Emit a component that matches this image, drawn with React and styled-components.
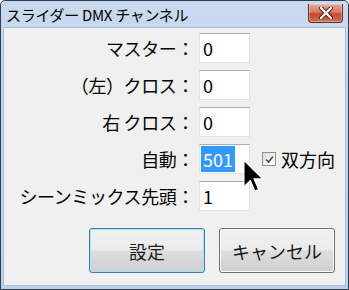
import styled, { createGlobalStyle } from "styled-components";

const GlobalStyle = createGlobalStyle`
  html, body {
    margin: 0;
    padding: 0;
    background: #ffffff;
  }
  * {
    box-sizing: border-box;
  }
`;

const FONT = `"Noto Sans CJK JP", "Noto Sans", sans-serif`;

const Window = styled.div`
  width: 349px;
  height: 290px;
  border: 1px solid #2e3e50;
  border-radius: 5px 5px 0 0;
  background: linear-gradient(to bottom, #c9daee 0%, #c2d5ec 30%, #bcd1ea 100%);
  display: flex;
  flex-direction: column;
  font-family: ${FONT};
  color: #000;
`;

const TitleBar = styled.div`
  height: 26px;
  display: flex;
  align-items: flex-start;
  padding: 3px 5px 0 5px;
`;

const Title = styled.span`
  font-size: 15px;
  line-height: 20px;
  letter-spacing: -0.3px;
  margin-top: 1px;
`;

const CloseButton = styled.div`
  margin-left: auto;
  width: 35px;
  height: 19px;
  border: 1px solid #6a2a20;
  border-top: none;
  border-radius: 0 0 4px 4px;
  background: linear-gradient(to bottom, #e8a796 0%, #d47a66 45%, #c24a32 55%, #d0704e 100%);
  display: flex;
  align-items: center;
  justify-content: center;
  box-shadow: inset 0 0 0 1px rgba(255, 255, 255, 0.35);
`;

const Client = styled.div`
  flex: 1;
  margin: 0 2px 3px 2px;
  background: #f0f0f0;
  border: 1px solid #a9bdd4;
  display: flex;
  flex-direction: column;
  position: relative;
`;

const Form = styled.div`
  display: flex;
  flex-direction: column;
  gap: 7px;
  padding-top: 5px;
`;

const Row = styled.div`
  display: flex;
  align-items: center;
  height: 30px;
`;

const Label = styled.span`
  width: 190px;
  text-align: right;
  font-size: 18px;
  line-height: 24px;
  white-space: nowrap;
  letter-spacing: -0.4px;
`;

const Field = styled.div`
  width: 51px;
  height: 30px;
  margin-left: 5px;
  background: #ffffff;
  border: 1px solid #e2e3ea;
  border-top-color: #abadb3;
  padding: 1px;
  display: flex;
  align-items: center;
`;

const Value = styled.span`
  font-size: 18px;
  line-height: 26px;
  padding: 0 2px;
  color: ${({ selected }) => (selected ? "#ffffff" : "#000000")};
  background: ${({ selected }) => (selected ? "#3399ff" : "transparent")};
`;

const CheckGroup = styled.label`
  display: flex;
  align-items: center;
  margin-left: 12px;
  gap: 5px;
  font-size: 18px;
  line-height: 24px;
`;

const CheckBox = styled.span`
  width: 14px;
  height: 14px;
  border: 1px solid #8e8f8f;
  background: linear-gradient(135deg, #dcdcdc 0%, #f4f4f4 60%, #ffffff 100%);
  display: flex;
  align-items: center;
  justify-content: center;
`;

const Buttons = styled.div`
  display: flex;
  justify-content: flex-end;
  gap: 14px;
  padding-right: 10px;
  margin-top: 17px;
`;

const Button = styled.div`
  width: 116px;
  height: 45px;
  border-radius: 3px;
  border: 1px solid ${({ primary }) => (primary ? "#3c7fb1" : "#707070")};
  box-shadow: inset 0 0 0 1px ${({ primary }) => (primary ? "#a6e3f6" : "#fbfbfb")};
  background: linear-gradient(
    to bottom,
    #f2f2f2 0%,
    #ebebeb 48%,
    #dddddd 52%,
    #cfcfcf 100%
  );
  display: flex;
  align-items: center;
  justify-content: center;
  font-size: 18px;
  line-height: 24px;
  color: #1a1a1a;
`;

const Cursor = styled.svg`
  position: absolute;
  left: 239px;
  top: 131px;
`;

export default function App() {
  return (
    <>
      <GlobalStyle />
      <Window>
        <TitleBar>
          <Title>スライダー DMX チャンネル</Title>
          <CloseButton>
            <svg width="14" height="12" viewBox="0 0 14 12">
              <path
                d="M2 1 L12 11 M12 1 L2 11"
                stroke="#4a1a12"
                strokeWidth="4.2"
                strokeLinecap="round"
              />
              <path
                d="M2 1 L12 11 M12 1 L2 11"
                stroke="#ffffff"
                strokeWidth="2.4"
                strokeLinecap="round"
              />
            </svg>
          </CloseButton>
        </TitleBar>
        <Client>
          <Form>
            <Row>
              <Label>マスター：</Label>
              <Field>
                <Value>0</Value>
              </Field>
            </Row>
            <Row>
              <Label>（左）クロス：</Label>
              <Field>
                <Value>0</Value>
              </Field>
            </Row>
            <Row>
              <Label>右 クロス：</Label>
              <Field>
                <Value>0</Value>
              </Field>
            </Row>
            <Row>
              <Label>自動：</Label>
              <Field>
                <Value selected>501</Value>
              </Field>
              <CheckGroup>
                <CheckBox>
                  <svg width="9" height="9" viewBox="0 0 9 9">
                    <path
                      d="M1 4.5 L3.5 7 L8 1.5"
                      fill="none"
                      stroke="#3a4a6a"
                      strokeWidth="1.6"
                    />
                  </svg>
                </CheckBox>
                双方向
              </CheckGroup>
            </Row>
            <Row>
              <Label>シーンミックス先頭：</Label>
              <Field>
                <Value>1</Value>
              </Field>
            </Row>
          </Form>
          <Buttons>
            <Button primary>設定</Button>
            <Button>キャンセル</Button>
          </Buttons>
          <Cursor width="21" height="34" viewBox="0 0 12.4 20">
            <path
              d="M0.5 0.5 L0.5 16.5 L4.3 12.7 L7 19 L9.3 18 L6.6 11.8 L11.8 11.8 Z"
              fill="#000000"
              stroke="#ffffff"
              strokeWidth="0.8"
              strokeLinejoin="miter"
            />
          </Cursor>
        </Client>
      </Window>
    </>
  );
}
